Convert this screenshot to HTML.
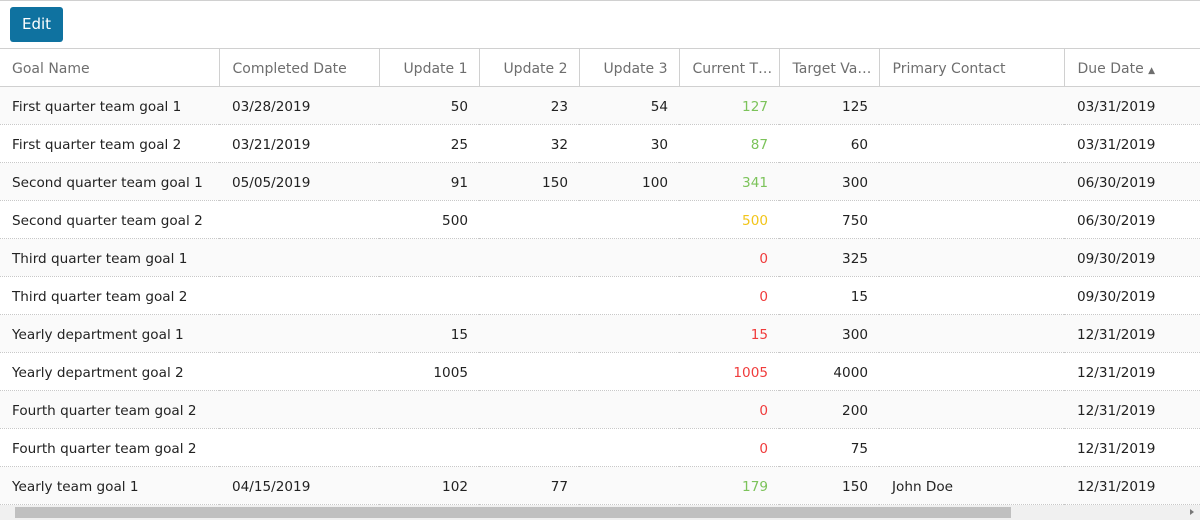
<!DOCTYPE html>
<html><head><style>
*{margin:0;padding:0;box-sizing:border-box}
body{width:1200px;height:520px;overflow:hidden;background:#fff;font-family:"DejaVu Sans","Liberation Sans",sans-serif;font-size:14px;color:#222;position:relative}
.top{position:absolute;left:0;top:0;width:1200px;height:1px;background:#d0d0d0}
.btn{position:absolute;left:10px;top:7px;width:53px;height:35px;background:#0f72a0;border-radius:3px;color:#fff;font-size:15px;line-height:35px;text-align:center}
table{position:absolute;left:0;top:48px;border-collapse:collapse;table-layout:fixed;width:1200px}
th{height:38px;font-weight:normal;color:#6e6e6e;text-align:left;padding:2px 12px 0 13px;border-top:1px solid #d0d0d0;border-bottom:1px solid #d0d0d0;border-right:1px solid #d0d0d0;white-space:nowrap;overflow:hidden}
th:first-child{padding-left:12px}
th:last-child{border-right:none}
td{height:38px;padding:2px 12px 0 13px;border-bottom:1px dotted #c8c8c8;white-space:nowrap;overflow:hidden;font-size:13.6px}
td:first-child{padding-left:12px}
tr:nth-child(odd) td{background:#fafafa}
.r{text-align:right;padding-right:11px}
.g{color:#7cc35a}.y{color:#f2c51a}.red{color:#f03c3c}
.sb{position:absolute;left:0;top:505px;width:1200px;height:15px;background:#f0f0f0}
.th{position:absolute;left:15px;top:507px;width:996px;height:11px;background:#c0c0c0}
.arr{position:absolute;left:1190px;top:509px;width:0;height:0;border-left:4px solid #777;border-top:3.5px solid transparent;border-bottom:3.5px solid transparent}
</style></head><body>
<div class="top"></div>
<div class="btn">Edit</div>
<table>
<colgroup><col style="width:219px"><col style="width:160px"><col style="width:100px"><col style="width:100px"><col style="width:100px"><col style="width:100px"><col style="width:100px"><col style="width:185px"><col style="width:136px"></colgroup>
<thead><tr><th>Goal Name</th><th>Completed Date</th><th class="r">Update 1</th><th class="r">Update 2</th><th class="r">Update 3</th><th class="r">Current T…</th><th class="r">Target Va…</th><th>Primary Contact</th><th>Due Date <span style="font-size:9px">▲</span></th></tr></thead>
<tbody>
<tr><td>First quarter team goal 1</td><td>03/28/2019</td><td class="r">50</td><td class="r">23</td><td class="r">54</td><td class="r g">127</td><td class="r">125</td><td></td><td>03/31/2019</td></tr>
<tr><td>First quarter team goal 2</td><td>03/21/2019</td><td class="r">25</td><td class="r">32</td><td class="r">30</td><td class="r g">87</td><td class="r">60</td><td></td><td>03/31/2019</td></tr>
<tr><td>Second quarter team goal 1</td><td>05/05/2019</td><td class="r">91</td><td class="r">150</td><td class="r">100</td><td class="r g">341</td><td class="r">300</td><td></td><td>06/30/2019</td></tr>
<tr><td>Second quarter team goal 2</td><td></td><td class="r">500</td><td></td><td></td><td class="r y">500</td><td class="r">750</td><td></td><td>06/30/2019</td></tr>
<tr><td>Third quarter team goal 1</td><td></td><td></td><td></td><td></td><td class="r red">0</td><td class="r">325</td><td></td><td>09/30/2019</td></tr>
<tr><td>Third quarter team goal 2</td><td></td><td></td><td></td><td></td><td class="r red">0</td><td class="r">15</td><td></td><td>09/30/2019</td></tr>
<tr><td>Yearly department goal 1</td><td></td><td class="r">15</td><td></td><td></td><td class="r red">15</td><td class="r">300</td><td></td><td>12/31/2019</td></tr>
<tr><td>Yearly department goal 2</td><td></td><td class="r">1005</td><td></td><td></td><td class="r red">1005</td><td class="r">4000</td><td></td><td>12/31/2019</td></tr>
<tr><td>Fourth quarter team goal 2</td><td></td><td></td><td></td><td></td><td class="r red">0</td><td class="r">200</td><td></td><td>12/31/2019</td></tr>
<tr><td>Fourth quarter team goal 2</td><td></td><td></td><td></td><td></td><td class="r red">0</td><td class="r">75</td><td></td><td>12/31/2019</td></tr>
<tr><td>Yearly team goal 1</td><td>04/15/2019</td><td class="r">102</td><td class="r">77</td><td></td><td class="r g">179</td><td class="r">150</td><td>John Doe</td><td>12/31/2019</td></tr>
</tbody></table>
<div class="sb"></div><div class="th"></div><div class="arr"></div>
</body></html>
